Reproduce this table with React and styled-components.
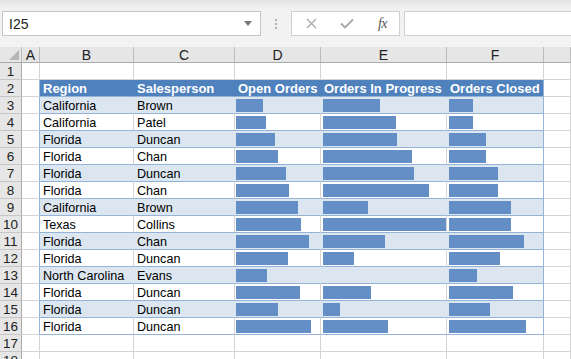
import React from 'react'
import styled, { createGlobalStyle } from 'styled-components'

const GlobalStyle = createGlobalStyle`
  html, body {
    margin: 0;
    padding: 0;
    background: #ffffff;
    overflow: hidden;
  }
  body {
    font-family: "Liberation Sans", Arial, sans-serif;
  }
`

const COLS = '22px 18px 94px 101px 86px 126px 97px 1fr'
const GRID = '#d4d4d4'
const TABLE_LINE = '#95b3d7'
const BAND = '#dce6f1'
const HEAD_FILL = '#4f81bd'
const BAR = '#638ec6'

const rows = [
  { region: 'California', person: 'Brown', open: 27, progress: 57, closed: 24 },
  { region: 'California', person: 'Patel', open: 30, progress: 73, closed: 24 },
  { region: 'Florida', person: 'Duncan', open: 39, progress: 74, closed: 37 },
  { region: 'Florida', person: 'Chan', open: 42, progress: 89, closed: 37 },
  { region: 'Florida', person: 'Duncan', open: 50, progress: 91, closed: 49 },
  { region: 'Florida', person: 'Chan', open: 53, progress: 106, closed: 49 },
  { region: 'California', person: 'Brown', open: 62, progress: 45, closed: 62 },
  { region: 'Texas', person: 'Collins', open: 65, progress: 123, closed: 62 },
  { region: 'Florida', person: 'Chan', open: 73, progress: 62, closed: 75 },
  { region: 'Florida', person: 'Duncan', open: 52, progress: 31, closed: 51 },
  { region: 'North Carolina', person: 'Evans', open: 31, progress: 0, closed: 28 },
  { region: 'Florida', person: 'Duncan', open: 64, progress: 48, closed: 64 },
  { region: 'Florida', person: 'Duncan', open: 42, progress: 17, closed: 41 },
  { region: 'Florida', person: 'Duncan', open: 75, progress: 65, closed: 77 },
]

function Cross() {
  return (
    <svg width="11" height="11" viewBox="0 0 11 11">
      <path d="M1 1 L10 10 M10 1 L1 10" stroke="#a6a6a6" strokeWidth="1.2" fill="none" />
    </svg>
  )
}

function Check() {
  return (
    <svg width="14" height="11" viewBox="0 0 14 11">
      <path d="M1 5.5 L5 9.5 L13 1.5" stroke="#a6a6a6" strokeWidth="1.8" fill="none" />
    </svg>
  )
}

function Corner() {
  return (
    <svg width="10" height="10" viewBox="0 0 10 10">
      <polygon points="0,10 10,10 10,0" fill="#b7b7b7" />
    </svg>
  )
}

function App() {
  // borders inside the table depend on the band and the column
  const tableCell = (banded, last) => ({
    $fill: banded ? BAND : '#ffffff',
    $right: last ? TABLE_LINE : banded ? BAND : GRID,
    $bottom: TABLE_LINE,
  })

  return (
    <Window>
      <GlobalStyle />
      <FormulaBar>
        <NameBox>
          <span>I25</span>
          <Caret />
        </NameBox>
        <Grip>
          <i /><i /><i />
        </Grip>
        <EditButtons>
          <Cross />
          <Check />
          <Fx>fx</Fx>
        </EditButtons>
        <FormulaInput />
      </FormulaBar>

      <Sheet>
        <Row $height={16}>
          <ColHead $corner><Corner /></ColHead>
          {['A', 'B', 'C', 'D', 'E', 'F', ''].map((l, i) => (
            <ColHead key={i}>{l}</ColHead>
          ))}
        </Row>

        <Row>
          <RowHead>1</RowHead>
          {Array.from({ length: 7 }).map((_, i) => (
            <Cell key={i} />
          ))}
        </Row>

        <Row>
          <RowHead>2</RowHead>
          <Cell $right={TABLE_LINE} />
          {['Region', 'Salesperson', 'Open Orders', 'Orders In Progress', 'Orders Closed'].map((t, i) => (
            <Cell key={t} $fill={HEAD_FILL} $right={i === 4 ? TABLE_LINE : HEAD_FILL} $bottom={TABLE_LINE}>
              <HeadText>{t}</HeadText>
            </Cell>
          ))}
          <Cell />
        </Row>

        {rows.map((r, i) => {
          const banded = i % 2 === 0
          return (
            <Row key={i}>
              <RowHead>{i + 3}</RowHead>
              <Cell $right={TABLE_LINE} />
              <Cell {...tableCell(banded)}><Text>{r.region}</Text></Cell>
              <Cell {...tableCell(banded)}><Text>{r.person}</Text></Cell>
              <Cell {...tableCell(banded)} $bar>
                {r.open > 0 && <Bar style={{ width: r.open }} />}
              </Cell>
              <Cell {...tableCell(banded)} $bar $pad={2}>
                {r.progress > 0 && <Bar style={{ width: r.progress }} />}
              </Cell>
              <Cell {...tableCell(banded, true)} $bar $pad={2}>
                {r.closed > 0 && <Bar style={{ width: r.closed }} />}
              </Cell>
              <Cell />
            </Row>
          )
        })}

        {[17, 18].map((n) => (
          <Row key={n}>
            <RowHead>{n}</RowHead>
            {Array.from({ length: 7 }).map((_, i) => (
              <Cell key={i} />
            ))}
          </Row>
        ))}
      </Sheet>
    </Window>
  )
}

export default App

const Window = styled.div`
  width: 571px;
  height: 359px;
  overflow: hidden;
  background: #ffffff;
`

const FormulaBar = styled.div`
  height: 47px;
  box-sizing: border-box;
  display: flex;
  align-items: center;
  padding: 0 0 0 2px;
  background: linear-gradient(#e3e3e3 0px, #f1f1f1 9px, #f3f3f3 100%);
`

const NameBox = styled.div`
  width: 259px;
  height: 25px;
  box-sizing: border-box;
  border: 1px solid #c6c6c6;
  background: #ffffff;
  display: flex;
  align-items: center;
  justify-content: space-between;
  padding: 0 8px 0 6px;
  font-size: 14px;
  color: #222;
`

const Caret = styled.span`
  width: 0;
  height: 0;
  border-left: 4px solid transparent;
  border-right: 4px solid transparent;
  border-top: 5px solid #7a7a7a;
`

const Grip = styled.div`
  width: 30px;
  display: flex;
  flex-direction: column;
  align-items: center;
  gap: 2px;

  i {
    display: block;
    width: 2px;
    height: 2px;
    background: #b0b0b0;
  }
`

const EditButtons = styled.div`
  width: 109px;
  height: 25px;
  box-sizing: border-box;
  border: 1px solid #d0d0d0;
  background: #ffffff;
  display: flex;
  align-items: center;
  padding: 0 12px 0 14px;
  justify-content: space-between;
`

const Fx = styled.span`
  font-family: "Liberation Serif", "Times New Roman", serif;
  font-style: italic;
  font-size: 14px;
  color: #555;
  letter-spacing: -0.5px;
`

const FormulaInput = styled.div`
  flex: 1;
  height: 25px;
  margin-left: 4px;
  box-sizing: border-box;
  border: 1px solid #d0d0d0;
  border-right: none;
  background: #ffffff;
`

const Sheet = styled.div`
  display: flex;
  flex-direction: column;
`

const Row = styled.div`
  display: grid;
  grid-template-columns: ${COLS};
  height: ${(p) => p.$height || 17}px;
`

const ColHead = styled.div`
  box-sizing: border-box;
  background: #e6e6e6;
  border-right: 1px solid #bcbcbc;
  border-bottom: 1px solid #ababab;
  display: flex;
  align-items: ${(p) => (p.$corner ? 'flex-end' : 'center')};
  justify-content: ${(p) => (p.$corner ? 'flex-end' : 'center')};
  padding: ${(p) => (p.$corner ? '0 2px 2px 0' : '0')};
  font-size: 14px;
  color: #222;
  line-height: 1;
`

const RowHead = styled.div`
  box-sizing: border-box;
  background: #e6e6e6;
  border-right: 1px solid #ababab;
  border-bottom: 1px solid #c6c6c6;
  display: flex;
  align-items: center;
  justify-content: center;
  padding-top: 1px;
  font-size: 13.5px;
  color: #222;
`

const Cell = styled.div`
  box-sizing: border-box;
  min-width: 0;
  overflow: hidden;
  background: ${(p) => p.$fill || '#ffffff'};
  border-right: 1px solid ${(p) => p.$right || GRID};
  border-bottom: 1px solid ${(p) => p.$bottom || GRID};
  display: flex;
  align-items: center;
  padding-left: ${(p) => (p.$bar ? p.$pad || 1 : 3)}px;
  padding-top: ${(p) => (p.$bar ? 0 : 1)}px;
  white-space: nowrap;
`

const Text = styled.span`
  font-size: 12.6px;
  color: #000;
`

const HeadText = styled.span`
  font-size: 13px;
  font-weight: bold;
  color: #ffffff;
`

const Bar = styled.div`
  height: 13px;
  background: ${BAR};
  flex: none;
`
